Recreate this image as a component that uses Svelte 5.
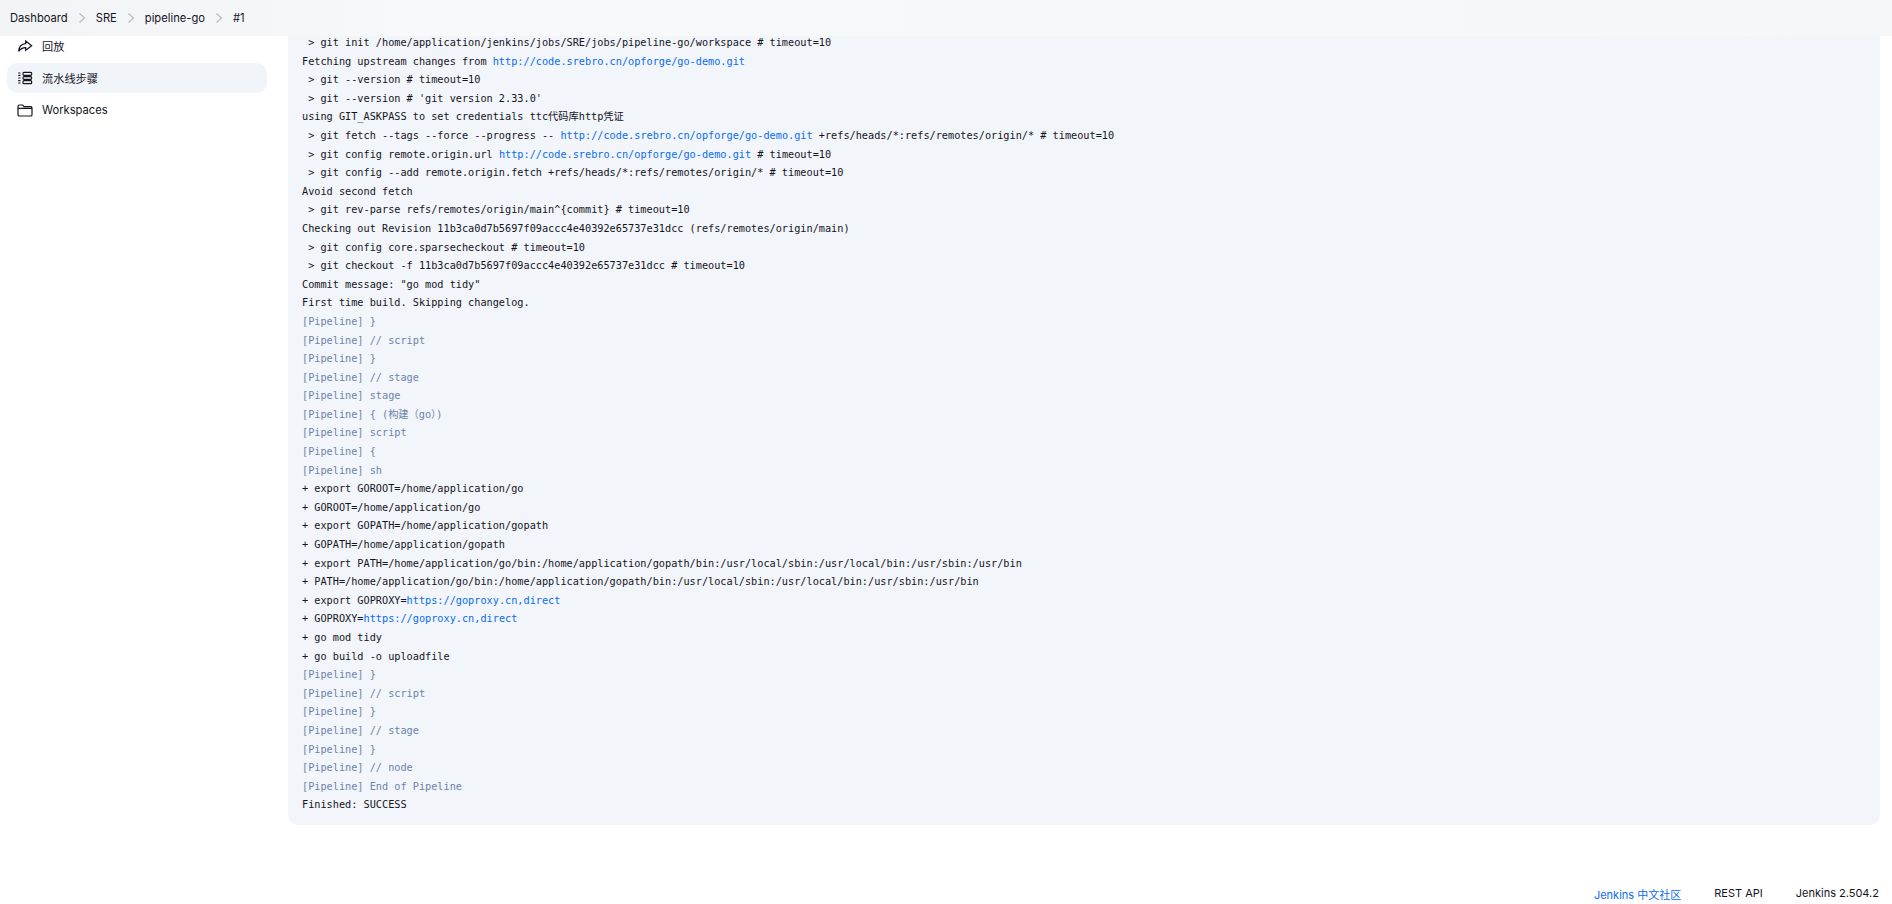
<script>
    const crumbs = ['Dashboard', 'SRE', 'pipeline-go', '#1'];

    // segments: plain text, or { link } / { dim } parts
    const url = 'http://code.srebro.cn/opforge/go-demo.git';
    const log = [
        [' > git init /home/application/jenkins/jobs/SRE/jobs/pipeline-go/workspace # timeout=10'],
        ['Fetching upstream changes from ', { link: url }],
        [' > git --version # timeout=10'],
        [" > git --version # 'git version 2.33.0'"],
        ['using GIT_ASKPASS to set credentials ttc代码库http凭证'],
        [' > git fetch --tags --force --progress -- ', { link: url }, ' +refs/heads/*:refs/remotes/origin/* # timeout=10'],
        [' > git config remote.origin.url ', { link: url }, ' # timeout=10'],
        [' > git config --add remote.origin.fetch +refs/heads/*:refs/remotes/origin/* # timeout=10'],
        ['Avoid second fetch'],
        [' > git rev-parse refs/remotes/origin/main^{commit} # timeout=10'],
        ['Checking out Revision 11b3ca0d7b5697f09accc4e40392e65737e31dcc (refs/remotes/origin/main)'],
        [' > git config core.sparsecheckout # timeout=10'],
        [' > git checkout -f 11b3ca0d7b5697f09accc4e40392e65737e31dcc # timeout=10'],
        ['Commit message: "go mod tidy"'],
        ['First time build. Skipping changelog.'],
        [{ dim: '[Pipeline] }' }],
        [{ dim: '[Pipeline] // script' }],
        [{ dim: '[Pipeline] }' }],
        [{ dim: '[Pipeline] // stage' }],
        [{ dim: '[Pipeline] stage' }],
        [{ dim: '[Pipeline] { (构建（go）)' }],
        [{ dim: '[Pipeline] script' }],
        [{ dim: '[Pipeline] {' }],
        [{ dim: '[Pipeline] sh' }],
        ['+ export GOROOT=/home/application/go'],
        ['+ GOROOT=/home/application/go'],
        ['+ export GOPATH=/home/application/gopath'],
        ['+ GOPATH=/home/application/gopath'],
        ['+ export PATH=/home/application/go/bin:/home/application/gopath/bin:/usr/local/sbin:/usr/local/bin:/usr/sbin:/usr/bin'],
        ['+ PATH=/home/application/go/bin:/home/application/gopath/bin:/usr/local/sbin:/usr/local/bin:/usr/sbin:/usr/bin'],
        ['+ export GOPROXY=', { link: 'https://goproxy.cn,direct' }],
        ['+ GOPROXY=', { link: 'https://goproxy.cn,direct' }],
        ['+ go mod tidy'],
        ['+ go build -o uploadfile'],
        [{ dim: '[Pipeline] }' }],
        [{ dim: '[Pipeline] // script' }],
        [{ dim: '[Pipeline] }' }],
        [{ dim: '[Pipeline] // stage' }],
        [{ dim: '[Pipeline] }' }],
        [{ dim: '[Pipeline] // node' }],
        [{ dim: '[Pipeline] End of Pipeline' }],
        ['Finished: SUCCESS']
    ];
</script>

<div class="page">
    <nav class="breadcrumbs">
        {#each crumbs as crumb, i}
            {#if i > 0}
                <svg class="sep" viewBox="0 0 8 12" width="8" height="12"><path d="M1.5 1.5 6.5 6 1.5 10.5" /></svg>
            {/if}
            <span>{crumb}</span>
        {/each}
    </nav>

    <div class="body">
        <aside class="side">
            <div class="task">
                <svg viewBox="0 0 24 24" width="16" height="16"><path d="M13 4.500 22 11.500 13 18.500v-4.200C8 14.300 5 16 2.500 20 3 13.500 6.500 9 13 8.500z" /></svg>
                <span>回放</span>
            </div>
            <div class="task active">
                <svg viewBox="0 0 24 24" width="16" height="16">
                    <rect x="9" y="3.500" width="13" height="4.500" rx="1.500" />
                    <rect x="9" y="10" width="13" height="4" rx="1.500" />
                    <rect x="9" y="16" width="13" height="4.500" rx="1.500" />
                    <path class="dots" d="M2.500 4.500h2M2.500 8h2M2.500 12h2M2.500 16h2M2.500 19.500h2" />
                </svg>
                <span>流水线步骤</span>
            </div>
            <div class="task">
                <svg viewBox="0 0 24 24" width="16" height="16"><path d="M1.500 6.500a2 2 0 0 1 2-2h5l2 2.500h10a2 2 0 0 1 2 2V19a2 2 0 0 1-2 2h-17a2 2 0 0 1-2-2zM1.500 9.500h21" /></svg>
                <span>Workspaces</span>
            </div>
        </aside>

        <main class="console">
            {#each log as line}
                <div class="line">{#each line as part}{#if typeof part === 'string'}{part}{:else if part.link}<span class="link">{part.link}</span>{:else}<span class="dim">{part.dim}</span>{/if}{/each}</div>
            {/each}
        </main>
    </div>

    <footer class="foot">
        <span class="link">Jenkins 中文社区</span>
        <span>REST API</span>
        <span>Jenkins 2.504.2</span>
    </footer>
</div>

<style>
    :global(body) {
        background: #fff;
        color: #14141f;
        font-family: Inter, "Noto Sans CJK SC", sans-serif;
        font-size: 11.2px;
    }

    .page {
        height: 904px;
        display: flex;
        flex-direction: column;
        overflow: hidden;
    }

    /* sits over the scrolled page, like the sticky header */
    .breadcrumbs {
        position: relative;
        z-index: 1;
        height: 36px;
        flex: none;
        display: flex;
        align-items: center;
        gap: 10px;
        padding-left: 10px;
        background: linear-gradient(90deg, #f3f4f6, #f5f6f8 14%, #f8f9fa 22%, #f7f8fa 60%, #f5f7f9);
    }

    .sep {
        fill: none;
        stroke: #b4bcc6;
        stroke-width: 1.2;
    }

    .body {
        display: flex;
        gap: 21px;
        margin-top: -5px;
        padding: 0 12px 0 7px;
    }

    .side {
        width: 260px;
        flex: none;
        display: flex;
        flex-direction: column;
        gap: 2px;
    }

    .task {
        height: 30px;
        display: flex;
        align-items: center;
        gap: 9px;
        padding-left: 10px;
        border-radius: 10px;
    }

    .task svg {
        fill: none;
        stroke: #14141f;
        stroke-width: 1.8;
        flex: none;
    }

    .task .dots {
        stroke-linecap: round;
    }

    .active {
        background: #f1f4f8;
    }

    .console {
        flex: 1;
        height: 794px;
        box-sizing: border-box;
        padding-top: 3px;
        padding-left: 14px;
        background: #f2f5f9;
        border-radius: 0 0 10px 10px;
        font-family: "DejaVu Sans Mono", "Noto Sans CJK SC", monospace;
        font-size: 10.23px;
        line-height: 18.6px;
        white-space: pre;
    }

    .link {
        color: #0b6cf0;
    }

    .dim {
        color: #6b84ab;
    }

    .foot {
        margin-top: auto;
        height: 18px;
        display: flex;
        justify-content: flex-end;
        gap: 33px;
        padding-right: 13px;
        font-size: 11px;
    }
</style>
